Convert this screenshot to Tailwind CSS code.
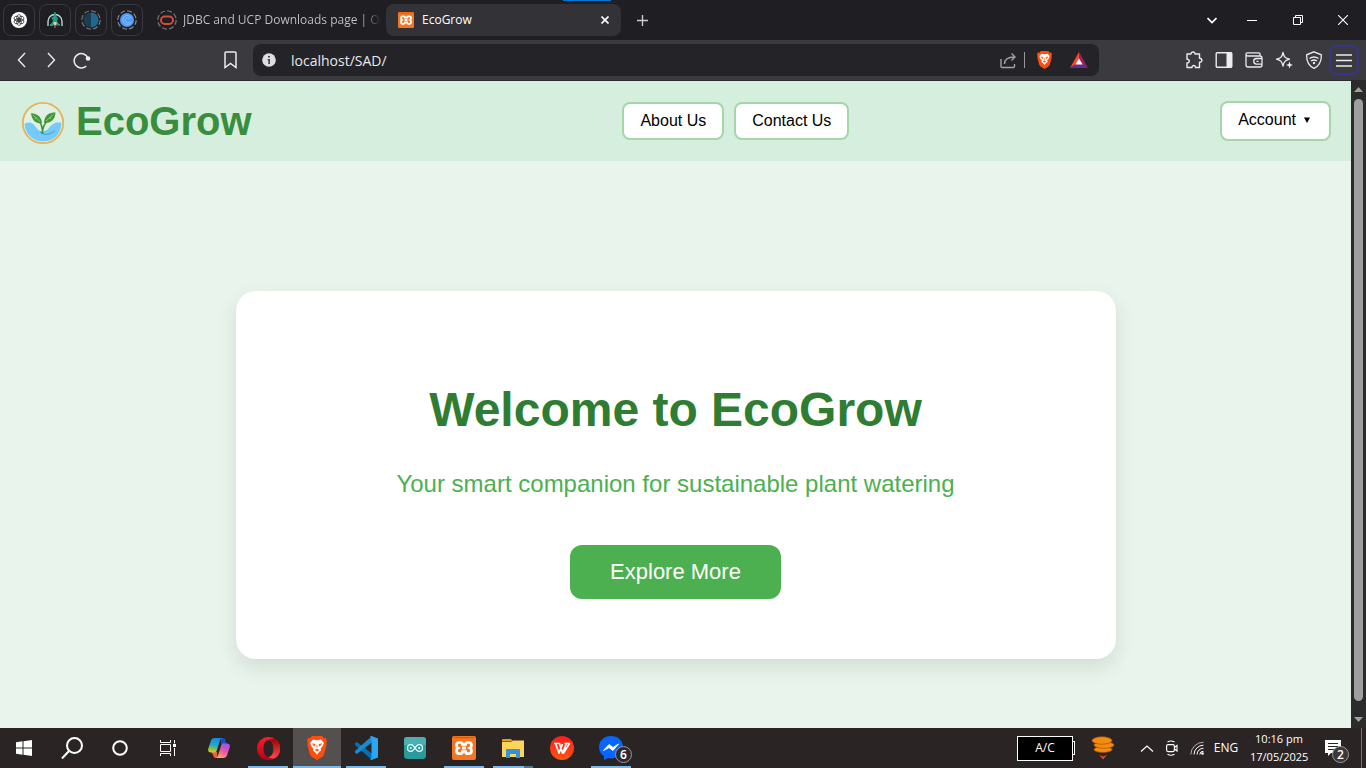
<!DOCTYPE html>
<html lang="en">
<head>
<meta charset="utf-8">
<title>EcoGrow</title>
<script src="https://cdn.jsdelivr.net/npm/@tailwindcss/browser@4"></script>
</head>
<body class="flex h-screen flex-col overflow-hidden bg-[#e9f5ec] font-['Noto_Sans',sans-serif]">
<svg class="hidden" aria-hidden="true">
  <defs>
    <symbol id="brave" viewBox="0 0 20 24">
      <path d="M5 0h10l2 2.200 2-.1 1 3-.8 1.600.5 1.500-2.500 9.600c-.4 1.400-1 2.300-2.200 3.100L10 24l-5-3.100c-1.200-.8-1.800-1.700-2.200-3.100L.3 8.200l.5-1.500L0 5.100l1-3 2 .1z" fill="#ff4d0d"/>
      <path d="M6 3.600l4 .7 4-.7 2.800 3.200-.8 3-2.400 3 .5 1.800-2 1.300L10 18.800l-2.100-2.900-2-1.300.5-1.800-2.400-3-.8-3z" fill="#fff"/>
      <path d="M5.500 7.800l2.600.7-.6 1.700zM14.500 7.800l-2.600.7.6 1.700zM10 9v3M8.300 14l1.700-.9 1.700.9L10 15z" fill="#ff4d0d" stroke="#ff4d0d" stroke-width=".7"/>
    </symbol>
    <symbol id="xampp" viewBox="0 0 24 24">
      <rect width="24" height="24" rx="2" fill="#f37623"/>
      <path d="M2 1.500h20" stroke="#c75a12"/>
      <path d="M7 6.500h1.500c1.500 0 2 1 2 2h3c0-1 .5-2 2-2H17c2 0 2.500 1.500 2.500 3 0 1.200-.6 2-1.500 2.500 1 .5 1.500 1.500 1.500 2.700 0 1.800-.8 3-2.500 3h-1.500c-1.500 0-2-1-2-2.200h-3c0 1.200-.5 2.200-2 2.200H7c-1.700 0-2.500-1.200-2.500-3 0-1.200.5-2.200 1.500-2.700-.9-.5-1.500-1.300-1.500-2.500 0-1.500.5-3 2.500-3z" fill="none" stroke="#fff" stroke-width="2.700"/>
      <path d="M10 12h4" stroke="#fff" stroke-width="3"/>
    </symbol>
  </defs>
</svg>

<!-- Tab strip -->
<div class="flex h-10 shrink-0 items-center bg-[#1f1e23] text-xs text-[#c4c4c8]">
  <div class="ml-[3px] flex gap-1">
    <button aria-label="ChatGPT" class="grid size-8 place-items-center rounded-lg border border-[#39383e]">
      <svg class="size-4" viewBox="0 0 16 16"><circle cx="8" cy="8" r="8" fill="#fff"/><g fill="none" stroke="#222" stroke-width=".7"><ellipse cx="8" cy="5.800" rx="2.300" ry="3.200"/><ellipse cx="8" cy="5.800" rx="2.300" ry="3.200" transform="rotate(60 8 8)"/><ellipse cx="8" cy="5.800" rx="2.300" ry="3.200" transform="rotate(120 8 8)"/><ellipse cx="8" cy="5.800" rx="2.300" ry="3.200" transform="rotate(180 8 8)"/><ellipse cx="8" cy="5.800" rx="2.300" ry="3.200" transform="rotate(240 8 8)"/><ellipse cx="8" cy="5.800" rx="2.300" ry="3.200" transform="rotate(300 8 8)"/></g></svg>
    </button>
    <button aria-label="Pinned tab" class="grid size-8 place-items-center rounded-lg border border-[#39383e]">
      <svg class="size-4" viewBox="0 0 16 16"><path d="M1 14V9.500a7 7 0 0 1 14 0V14" fill="none" stroke="#b9d8d2" stroke-width="1.400"/><path d="M7 0h1.500l.5 4 2 2-1 3 2 3H4l2-3-1.500-3L7 4zM3 12h3v2H3zM10 12h3v1.500h-3z" fill="#1e9c86"/><path d="M6.500 10h3v3.500h-3z" fill="#e9c9ae"/><path d="M7 13.500h2V16H7z" fill="#8a4a3a"/></svg>
    </button>
    <button aria-label="Pinned tab" class="grid size-8 place-items-center rounded-lg border border-[#39383e]">
      <svg class="size-5" viewBox="0 0 20 20"><circle cx="10" cy="10" r="9.200" fill="none" stroke="#77777b" stroke-width="1.200" stroke-dasharray="5 2.200"/><circle cx="10" cy="10" r="7.500" fill="#1d3c50"/><path d="M10 2.500a7.500 7.500 0 0 1 0 15z" fill="#1c6892"/></svg>
    </button>
    <button aria-label="Pinned tab" class="grid size-8 place-items-center rounded-lg border border-[#39383e]">
      <svg class="size-5" viewBox="0 0 20 20"><circle cx="10" cy="10" r="9.200" fill="none" stroke="#8a8a8e" stroke-width="1.200" stroke-dasharray="5 2.200"/><circle cx="10" cy="10" r="7" fill="#4c9bf8"/><path d="M14.500 11.500a4.500 4.500 0 1 1 0-3M12.500 12a2.500 2.500 0 1 1 0-3.500" fill="none" stroke="#9cc8ff" stroke-width=".8"/></svg>
    </button>
  </div>
  <button class="ml-3.5 flex w-[229px] items-center gap-1.5 whitespace-nowrap">
    <svg class="size-5 shrink-0" viewBox="0 0 20 20"><circle cx="10" cy="10" r="9.200" fill="none" stroke="#77777b" stroke-width="1.200" stroke-dasharray="5 2.200"/><rect x="4" y="6.500" width="12" height="7.500" rx="3.700" fill="none" stroke="#d34b3d" stroke-width="2"/></svg>
    <span class="min-w-0 flex-1 bg-linear-to-r from-[#c4c4c8] from-88% to-[#1f1e23] to-98% bg-clip-text text-left font-['Open_Sans',sans-serif] text-transparent">JDBC and UCP Downloads page | Or</span>
  </button>
  <div class="flex h-8 w-[235px] items-center rounded-lg bg-[#333237] pr-2.5 pl-3 text-white">
    <svg class="size-4"><use href="#xampp"/></svg>
    <span class="ml-2 flex-1 font-['Open_Sans',sans-serif]">EcoGrow</span>
    <button aria-label="Close tab" class="grid size-3 place-items-center"><svg class="size-2" viewBox="0 0 8 8"><path d="M.5.5l7 7M7.500.5l-7 7" stroke="#fff" stroke-width="1.600"/></svg></button>
  </div>
  <button aria-label="New tab" class="ml-4 grid place-items-center"><svg class="size-[11px]" viewBox="0 0 11 11"><path d="M5.500 0v11M0 5.500h11" stroke="#ccc" stroke-width="1.400"/></svg></button>
  <div class="ml-auto flex items-center">
    <button aria-label="Search tabs" class="grid w-8 place-items-center"><svg class="h-[7px] w-2.5" viewBox="0 0 10 7"><path d="M.5 1L5 5.500 9.500 1" fill="none" stroke="#fff" stroke-width="1.700"/></svg></button>
    <button aria-label="Minimize" class="grid w-12 place-items-center"><svg class="h-px w-2.5" viewBox="0 0 10 1"><rect width="10" height="1" fill="#fff"/></svg></button>
    <button aria-label="Restore" class="grid w-11 place-items-center"><svg class="size-2.5" viewBox="0 0 10 10"><path d="M.5 2.500h7v7h-7zM2.500 2.500v-2h7v7h-2" fill="none" stroke="#fff"/></svg></button>
    <button aria-label="Close" class="grid w-[46px] place-items-center"><svg class="size-2.5" viewBox="0 0 10 10"><path d="M0 0l10 10M10 0L0 10" stroke="#fff" stroke-width="1.100"/></svg></button>
  </div>
</div>
<div class="absolute top-0 left-[563px] h-px w-12 bg-[#0078d7]"></div>

<!-- Toolbar -->
<div class="flex h-[41px] shrink-0 items-center border-b border-[#2b2a2e] bg-[#3b3a3f] text-[#ececee]">
  <div class="flex w-[253px] shrink-0 items-center pl-[17px]">
    <button aria-label="Back"><svg class="h-4 w-[9px]" viewBox="0 0 9 16"><path d="M8 1L1.500 8 8 15" fill="none" stroke="currentColor" stroke-width="1.400"/></svg></button>
    <button aria-label="Forward" class="ml-[21px]"><svg class="h-4 w-[9px]" viewBox="0 0 9 16"><path d="M1 1l6.500 7L1 15" fill="none" stroke="currentColor" stroke-width="1.400"/></svg></button>
    <button aria-label="Reload" class="ml-[17px]"><svg class="h-[17px] w-[18px]" viewBox="0 0 18 17"><path d="M13.300 14A7.200 7.200 0 1 1 15 6" fill="none" stroke="currentColor" stroke-width="1.500"/><circle cx="15" cy="6.500" r="2.300" fill="currentColor"/></svg></button>
    <button aria-label="Bookmark" class="mr-4 ml-auto"><svg class="h-[18px] w-[13px]" viewBox="0 0 13 18"><path d="M2 1h9q1 0 1 1v14.500L6.500 12.500 1 16.500V2q0-1 1-1z" fill="none" stroke="currentColor" stroke-width="1.500"/></svg></button>
  </div>
  <div class="flex h-8 w-[846px] items-center rounded-lg bg-[#242328] pr-[11px] pl-[9px]">
    <svg class="size-3.5" viewBox="0 0 14 14"><circle cx="7" cy="7" r="6.800" fill="#dedee2"/><path d="M6 3h2v1.600H6zM5.600 6H8v5H6.300V7.300h-.7z" fill="#46454b"/></svg>
    <input aria-label="Address" value="localhost/SAD/" class="ml-[15px] min-w-0 flex-1 bg-transparent font-['Open_Sans',sans-serif] text-[14px] text-[#e8e8ea] outline-none">
    <button aria-label="Share"><svg class="h-[17px] w-[17px]" viewBox="0 0 17 17"><path d="M1 7v7.500q0 1 1 1h11.500q1 0 1-1V12M4.500 12C4.500 7 8 5 14.500 5M11.500 1.500L15 5l-3.500 3.500" fill="none" stroke="#a2a2a6" stroke-width="1.400"/></svg></button>
    <span class="mr-3 ml-[7px] h-4 w-px bg-[#99999d]"></span>
    <button aria-label="Brave Shields"><svg class="h-[18px] w-[15px]"><use href="#brave"/></svg></button>
    <button aria-label="Brave Rewards" class="ml-[18px]"><svg class="h-4 w-[18px]" viewBox="0 0 18 16"><path d="M9 0L0 16l9-6z" fill="#ff4724"/><path d="M9 0l9 16-9-6z" fill="#9e1f63"/><path d="M0 16h18l-9-6z" fill="#662d91"/><path d="M9 6.500l3.700 6H5.300z" fill="#fff"/></svg></button>
  </div>
  <div class="ml-auto flex items-center gap-3 pr-[7px]">
    <button aria-label="Extensions"><svg class="size-[18px]" viewBox="0 0 18 18"><path d="M2 3h4c-.3-2.700 4.300-2.700 4 0h4.500v4.300c3.200-.2 3.200 4.200 0 4V16.500H10.500c.2-2.600-3.700-2.600-3.500 0H2V12c3 .2 3-4 0-3.800z" fill="none" stroke="currentColor" stroke-width="1.400" stroke-linejoin="round"/></svg></button>
    <button aria-label="Sidebar"><svg class="size-[18px]" viewBox="0 0 18 18"><rect x="1.200" y="1.700" width="15.600" height="14.600" rx="1" fill="none" stroke="currentColor" stroke-width="1.400"/><path d="M11.500 1.500H17v15h-5.500z" fill="currentColor"/></svg></button>
    <button aria-label="Wallet"><svg class="size-[18px]" viewBox="0 0 18 18"><path d="M15 5V3q0-1.200-1.200-1.200H2.500Q1 1.800 1 3.300V14q0 2 2 2h12q2 0 2-2V7q0-2-2-2H3Q1 5 1 3.300M17 7.500h-5.500a2.800 2.800 0 0 0 0 5.600H17M11.500 10.300h2" fill="none" stroke="currentColor" stroke-width="1.300"/></svg></button>
    <button aria-label="Leo AI"><svg class="size-[18px]" viewBox="0 0 18 18"><path d="M8 1.500c1 4.500 2 5.500 6.500 6.700C10 9.500 9 10.500 8 15c-1-4.500-2-5.500-6.500-6.800C6 7 7 6 8 1.500z" fill="none" stroke="currentColor" stroke-width="1.300" stroke-linejoin="round"/><path d="M14.500 10.500l.9 2.600 2.600.9-2.600.9-.9 2.600-.9-2.600-2.600-.9 2.600-.9z" fill="currentColor"/></svg></button>
    <button aria-label="VPN"><svg class="size-[18px]" viewBox="0 0 18 18"><path d="M9 .8l7.300 3c.3 6-1.500 10.700-7.300 13.500C3.200 14.500 1.400 9.800 1.700 3.800z" fill="none" stroke="currentColor" stroke-width="1.300"/><path d="M4.500 7.500q4.500-3 9 0M6 10q3-2 6 0" fill="none" stroke="currentColor" stroke-width="1.500"/><circle cx="9" cy="12" r="1.200" fill="currentColor"/></svg></button>
    <button aria-label="Menu" class="-ml-1.5 grid size-[30px] place-items-center rounded-lg border-2 border-[#37348a]"><svg class="h-[13px] w-4" viewBox="0 0 16 13"><path d="M0 1h16M0 6.500h16M0 12h16" stroke="currentColor" stroke-width="1.300"/></svg></button>
  </div>
</div>

<!-- Page and its scrollbar -->
<div class="flex min-h-0 flex-1">
  <div class="min-w-0 flex-1 overflow-hidden bg-[#e9f5ec] font-['Liberation_Sans',Arial,sans-serif]">
    <header class="flex h-20 items-center justify-between bg-[#d5eedd] px-5">
      <a href="#" class="flex items-center gap-2.5">
        <svg class="mt-1 size-[46px]" viewBox="0 0 46 46">
          <circle cx="23" cy="23" r="19.500" fill="#e0f1e4"/>
          <path d="M4.500 24c5-3 9-1 12 4 3 4.500 9 4 12 .5 4-5 8-7.500 13-5.500C41 35 33 41.500 23 41.500S5 34 4.500 24z" fill="#74cafb"/>
          <path d="M20 32c4 3.500 10 3 15-1.500" fill="none" stroke="#2e86b5" stroke-width=".7"/>
          <path d="M22.500 34c.2-6-.5-10-4-13M22.500 34c-.3-6 1-10 6-14" fill="none" stroke="#3b8f35" stroke-width="1.600"/>
          <path d="M11 13c5 1 10 2 11 10-6 1-10-2-11-10z" fill="#43963a"/><path d="M35.500 12.500c-6 0-11 2-11.500 10.500 7 0 11-3 11.500-10.500z" fill="#43963a"/>
          <path d="M13 15l7 6.500M33.500 14.500l-7.500 6.500M15 19l1.500-1M31 19l-1-1.500" stroke="#a4d98c" stroke-width=".8"/>
          <circle cx="23" cy="23" r="20.200" fill="none" stroke="#e4b455" stroke-width="1.800"/>
        </svg>
        <span class="text-[40px] leading-none font-bold text-[#388e3c]">EcoGrow</span>
      </a>
      <nav class="flex gap-2.5">
        <a href="#about" class="rounded-lg border-2 border-[#a5d6a7] bg-white px-4 py-2 text-base leading-[18px] text-black">About Us</a>
        <a href="#contact" class="rounded-lg border-2 border-[#a5d6a7] bg-white px-4 py-2 text-base leading-[18px] text-black">Contact Us</a>
      </nav>
      <button class="flex h-10 items-center gap-2 rounded-lg border-2 border-[#a5d6a7] bg-white pr-[19px] pb-0.5 pl-4 text-base leading-[18px] text-black">Account
        <svg class="h-1.5 w-[6px]" viewBox="0 0 6 6"><path d="M0 .5h6L3 6z"/></svg>
      </button>
    </header>
    <main class="px-5 pt-[130px]">
      <section class="mx-auto flex max-w-[880px] flex-col items-center rounded-[20px] bg-white px-10 pt-[91px] pb-[60px] text-center shadow-[0_8px_20px_rgba(0,0,0,0.1)]">
        <h1 class="text-5xl leading-[56px] font-bold text-[#2e7d32]">Welcome to EcoGrow</h1>
        <p class="mt-8 text-2xl leading-7 text-[#4caf50]">Your smart companion for sustainable plant watering</p>
        <a href="#explore" class="mt-[47px] rounded-xl bg-[#4caf50] px-10 py-[14px] text-[22px] leading-[26px] text-white">Explore More</a>
      </section>
    </main>
  </div>
  <div class="flex w-[15px] shrink-0 flex-col items-center justify-between bg-[#2b2b2b] py-1.5" aria-hidden="true">
    <svg class="h-[5px] w-[9px]" viewBox="0 0 9 5"><path d="M0 5h9L4.500 0z" fill="#a0a0a0"/></svg>
    <div class="my-[7px] mb-4 w-[9px] flex-1 rounded-full bg-[#9f9f9f]"></div>
    <svg class="h-[5px] w-[9px]" viewBox="0 0 9 5"><path d="M0 0h9L4.500 5z" fill="#a0a0a0"/></svg>
  </div>
</div>

<!-- Taskbar -->
<footer class="flex h-10 shrink-0 items-center bg-[#2a2524] text-white">
  <button aria-label="Start" class="grid h-10 w-12 place-items-center"><svg class="size-4" viewBox="0 0 16 16"><path d="M0 2.200L6.500 1.300V7.500H0zM7.500 1.200L16 0v7.500H7.500zM0 8.500h6.500v6.200L0 13.800zM7.500 8.500H16V16l-8.500-1.200z" fill="#fff"/></svg></button>
  <button aria-label="Search" class="grid h-10 w-12 place-items-center"><svg class="size-[22px]" viewBox="0 0 22 22"><circle cx="13.500" cy="8.500" r="7.500" fill="none" stroke="#fff" stroke-width="2"/><path d="M8 14l-7 7.500" stroke="#fff" stroke-width="2"/></svg></button>
  <button aria-label="Cortana" class="grid h-10 w-12 place-items-center"><svg class="size-4" viewBox="0 0 16 16"><circle cx="8" cy="8" r="6.800" fill="none" stroke="#fff" stroke-width="2"/></svg></button>
  <button aria-label="Task view" class="grid h-10 w-12 place-items-center"><svg class="size-4" viewBox="0 0 16 16"><path d="M.5 0v2.500h10V0M.5 16v-2.500h10V16M.5 4.500h10v7H.5zM14.500 0v3.500M14.500 8v8" fill="none" stroke="#fff"/><path d="M13 4h3v3h-3z" fill="#fff"/></svg></button>
  <div class="ml-[3px] flex gap-px">
    <button aria-label="Copilot" class="grid h-10 w-12 place-items-center"><svg class="size-[22px]" viewBox="0 0 22 22"><defs><linearGradient id="copBlue" x1=".5" x2=".3" y2="1"><stop stop-color="#168be0"/><stop offset=".5" stop-color="#24a8c5"/><stop offset=".75" stop-color="#83bf4b"/><stop offset="1" stop-color="#e7c729"/></linearGradient><linearGradient id="copPink" x1=".7" x2=".3" y1="0" y2="1"><stop stop-color="#9a56ec"/><stop offset=".5" stop-color="#e954a5"/><stop offset="1" stop-color="#ffab64"/></linearGradient></defs><path d="M13 1h2c1.500 0 2 .8 2.500 2.200L18.500 7H13z" fill="#1a4fc4"/><path d="M3.500 15H9l.5 6H8c-1.500 0-2.200-.8-2.700-2.200z" fill="#f0603e"/><path d="M7 1h7.500c-1.500 0-2 1-2.500 2.500L8.800 13.500C8.300 15 7.500 15.500 6 15.500H3c-2.300 0-3.300-1.500-2.700-4L3 3.500C3.700 1.800 5 1 7 1z" fill="url(#copBlue)"/><path d="M15.500 6.500H19c2.300 0 3.300 1.500 2.700 4L19.200 18c-.7 2-2 3-4 3H7.500c1.500 0 2-1 2.500-2.500l3.100-10c.5-1.500 1-2 2.400-2z" fill="url(#copPink)"/></svg></button>
    <button aria-label="Opera" class="relative grid h-10 w-12 place-items-center"><svg class="size-[23px]" viewBox="0 0 23 23"><defs><linearGradient id="opGrad" x1="0" x2="0" y1="0" y2="1"><stop stop-color="#ff1b2d"/><stop offset="1" stop-color="#b80018"/></linearGradient><linearGradient id="opRight" x1="0" x2="0" y1="0" y2="1"><stop stop-color="#9c0000"/><stop offset="1" stop-color="#ff4b4b"/></linearGradient></defs><path fill-rule="evenodd" d="M11.500 0a11.500 11.500 0 1 0 0 23 11.500 11.500 0 0 0 0-23zm0 3c3 0 5 4 5 8.500s-2 8.500-5 8.500-5-4-5-8.500 2-8.500 5-8.500z" fill="url(#opGrad)"/><path d="M11.500 3c3-2 5.500-1.500 7.500-.5a11.500 11.500 0 0 1 0 18c-2 1-4.500 1.500-7.500-.5 3 0 5-4 5-8.500s-2-8.500-5-8.500z" fill="url(#opRight)"/></svg><span class="absolute inset-x-1 bottom-0 h-0.5 bg-[#76b9ed]"></span></button>
    <button aria-label="Brave" class="relative grid h-10 w-12 place-items-center bg-[#53504f]"><svg class="h-6 w-5"><use href="#brave"/></svg><span class="absolute inset-x-0 bottom-0 h-0.5 bg-[#76b9ed]"></span></button>
    <button aria-label="Visual Studio Code" class="relative grid h-10 w-12 place-items-center"><svg class="size-6" viewBox="0 0 24 24"><path d="M1 7.200L2.800 6 18 17.500V24L1 9z" fill="#0071b7"/><path d="M1 16.800L2.800 18 18 6.500V0L1 15z" fill="#168bd2"/><path d="M17.500 0L24 2.500v19L17.500 24c-.8 0-1.200-.5-1.200-1l1.200-1V2l-1.200-1c0-.5.400-1 1.200-1z" fill="#2aa6f2"/></svg><span class="absolute inset-x-1 bottom-0 h-0.5 bg-[#76b9ed]"></span></button>
    <button aria-label="Arduino IDE" class="grid h-10 w-12 place-items-center"><svg class="size-[22px]" viewBox="0 0 22 22"><rect width="22" height="22" rx="3.500" fill="#2a9a9d"/><path d="M3 0h16q3 0 3 3v5H0V3q0-3 3-3z" fill="#4bb0b0"/><path d="M11 11C9.500 8.500 8.500 7.700 6.800 7.700a3.300 3.300 0 0 0 0 6.600C8.500 14.300 9.500 13.500 11 11s2.500-3.300 4.200-3.300a3.300 3.300 0 0 1 0 6.600C13.500 14.300 12.500 13.500 11 11zM5.800 11h2M14.200 11h2M15.200 10v2" fill="none" stroke="#e7ffff" stroke-width="1.300"/></svg></button>
    <button aria-label="XAMPP" class="relative grid h-10 w-12 place-items-center"><svg class="size-6"><use href="#xampp"/></svg><span class="absolute inset-x-1 bottom-0 h-0.5 bg-[#76b9ed]"></span></button>
    <button aria-label="File Explorer" class="relative grid h-10 w-12 place-items-center"><svg class="h-[19px] w-[22px]" viewBox="0 0 22 19"><path d="M0 1q0-1 1-1h8l2 2.500H0z" fill="#e0a20f"/><path d="M0 3h9l2-1.500h11V18H0z" fill="#ffd45e"/><path d="M4 19v-8q0-1 1-1h12q1 0 1 1v8h-4v-4H8v4z" fill="#3293db"/></svg><span class="absolute inset-x-1 bottom-0 flex h-0.5 bg-[#4c7695]"><span class="w-[31px] bg-[#76b9ed]"></span></span></button>
    <button aria-label="WPS Office" class="grid h-10 w-12 place-items-center"><svg class="size-6" viewBox="0 0 24 24"><defs><linearGradient id="wpsGrad" x1="0" x2="0" y1="0" y2="1"><stop stop-color="#fa1c1c"/><stop offset="1" stop-color="#ff5610"/></linearGradient></defs><circle cx="12" cy="12" r="12" fill="url(#wpsGrad)"/><path d="M4 7.500h5.500l3 9.500 4-9.500M5.500 7.500L9 17l3.500-9M12.500 17h1L19.500 7.500h-5" fill="none" stroke="#fff" stroke-width="1.700" stroke-linejoin="round"/></svg></button>
    <button aria-label="Messenger, 6 notifications" class="relative grid h-10 w-12 place-items-center"><svg class="size-6" viewBox="0 0 24 24"><path d="M12 0c7 0 12 4.800 12 11.300S19 22.500 12 22.500c-1.200 0-2-.2-3-.4L5 24v-3.700c-3-2-5-5-5-9C0 4.800 5 0 12 0z" fill="#0866ff"/><path d="M4.500 14.500L10 8.500l4 3 5.500-3.500-5.500 6.500-4-3z" fill="#fff" stroke="#fff"/></svg><span class="absolute top-[18px] left-7 grid size-[17px] place-items-center rounded-full border border-[#98989a] bg-[#2b2a2c] text-xs leading-none font-semibold">6</span><span class="absolute inset-x-1 bottom-0 h-0.5 bg-[#76b9ed]"></span></button>
  </div>
  <div class="ml-auto flex items-center font-['Open_Sans',sans-serif] text-xs">
    <div class="flex items-center"><span class="grid h-[25px] w-14 place-items-center border border-white bg-black">A/C</span><span class="h-3.5 w-0.5 border-y border-r border-white bg-black"></span></div>
    <button aria-label="Battery saver" class="ml-4"><svg class="h-6 w-6" viewBox="0 0 24 24"><g fill="#f58b12" stroke="#a85205" stroke-width=".7"><ellipse cx="12" cy="13.500" rx="9" ry="3"/><ellipse cx="13" cy="9" rx="10" ry="3.300"/><ellipse cx="11" cy="4.500" rx="10" ry="3.700"/></g><path d="M8 19l4 1.500L16 19l-4 4.500z" fill="#e54825"/></svg></button>
    <button aria-label="Show hidden icons" class="ml-[25px]"><svg class="h-[7px] w-[14px]" viewBox="0 0 14 7"><path d="M1 6.500l6-5.500 6 5.500" fill="none" stroke="#fff" stroke-width="1.200"/></svg></button>
    <button aria-label="Meet Now" class="ml-3"><svg class="h-4 w-3" viewBox="0 0 12 16"><rect x=".6" y="4.600" width="7.800" height="7" rx="1.500" fill="none" stroke="#fff" stroke-width="1.200"/><path d="M8.500 7.500l2.500-2v5.500l-2.500-2M1.500 2q3.500-2 7 0M1.500 14.200q3.500 2 7 0" fill="none" stroke="#fff" stroke-width="1.100"/></svg></button>
    <button aria-label="Network" class="ml-3"><svg class="size-[14px]" viewBox="0 0 14 14"><g fill="none" stroke="#fff"><path d="M.8 13.500A12.700 12.700 0 0 1 13.500 1.200" opacity=".65"/><path d="M4 13.500a9.500 9.500 0 0 1 9.500-9.300M7 13.500a6.500 6.500 0 0 1 6.500-6.300M9.800 13.500a3.700 3.700 0 0 1 3.700-3.300"/></g><circle cx="12.500" cy="12.500" r="1.300" fill="#fff"/></svg></button>
    <button class="ml-2 w-[28px] whitespace-nowrap">ENG</button>
    <button class="ml-2.5 w-[58px] text-center text-[11px] leading-[18px] whitespace-nowrap"><span class="block">10:16 pm</span><span class="block">17/05/2025</span></button>
    <button aria-label="Notifications" class="relative ml-[17px] h-10 w-[26px]"><svg class="absolute top-3 left-0 size-4" viewBox="0 0 16 16"><path d="M0 0h16v13H6l-3 3v-3H0z" fill="#fff"/><path d="M3 3.500h10M3 6.500h10M3 9.500h7" stroke="#2a2524"/></svg><span class="absolute top-[18px] left-[7px] grid size-[17px] place-items-center rounded-full border border-[#98989a] bg-[#3a3838] leading-none font-semibold">2</span></button>
    <span class="ml-2.5 h-10 w-[5px] border-l border-[#77726f]"></span>
  </div>
</footer>
</body>
</html>
